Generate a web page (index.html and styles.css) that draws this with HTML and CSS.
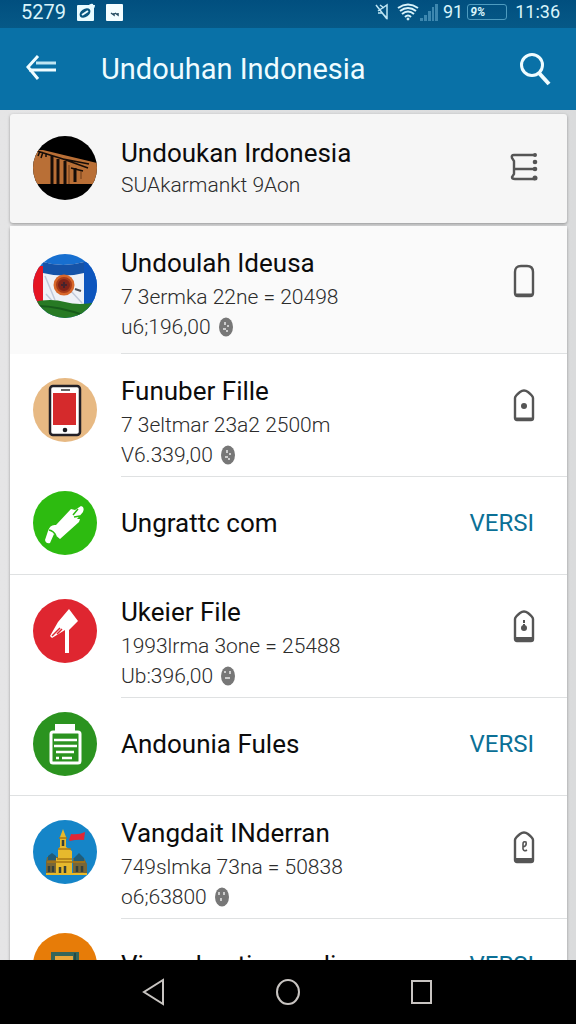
FILE: index.html
```html
<!DOCTYPE html>
<html lang="id">
  <head>
    <meta charset="UTF-8" />
    <meta name="viewport" content="width=device-width, initial-scale=1.0" />
    <title>Undouhan Indonesia</title>
    <link rel="stylesheet" href="styles.css">
  </head>
  <body>
    <div class="screen">
      <div class="status-bar">
        <span class="status-text">5279</span>
        <svg class="status-edit" width="20" height="20" viewBox="0 0 20 20">
          <rect x="1" y="3" width="17" height="16" rx="1" fill="#e9fbff" />
          <ellipse cx="9" cy="11" rx="6" ry="4" transform="rotate(-35 9 11)" fill="#07557f" />
          <path d="M6 13l6-4" stroke="#e9fbff" stroke-width="2" />
          <path d="M13 5q1-3 4-2M14 7q4 0 4-4" fill="none" stroke="#e9fbff" stroke-width="2" />
        </svg>
        <svg class="status-app" width="17" height="17" viewBox="0 0 17 17">
          <rect width="17" height="17" rx="1" fill="#f4fdff" />
          <path d="M5 9l3 2v-2M9 9l3 2v-2" stroke="#244a60" stroke-width="1.5" fill="none" />
        </svg>
        <div class="status-right">
          <svg width="14" height="18" viewBox="0 0 14 18" fill="none" stroke="#bfe6f4" stroke-width="1.5">
            <path d="M1 2l11 14M3 10h4l5 5V2L9 4L3 8M5 2l4 3" />
          </svg>
          <svg class="wifi" width="22" height="18" viewBox="0 0 22 18" fill="none" stroke="#d9f4fb" stroke-width="2.4">
            <path d="M1 5Q11-2 21 5M3 8Q11 2 19 8M5 11Q11 6 17 11M8 14Q11 11 14 14" stroke-width="2" />
            <circle cx="11" cy="16" r="1" fill="#d9f4fb" stroke-width="1" />
          </svg>
          <svg width="20" height="18" viewBox="0 0 20 18" fill="#3d87af">
            <path d="M1 15h3v3H1zM5 12h3v6H5zM9 8h3v10H9zM13 4h2v14h-2zM16 1h3v17h-3z" />
          </svg>
          <span class="status-text charge">91</span>
          <span class="battery">9%</span>
          <span class="status-text clock">11:36</span>
        </div>
      </div>

      <header class="app-bar">
        <button class="icon-button" aria-label="Kembali">
          <svg width="32" height="28" viewBox="0 0 32 28" fill="none" stroke="#effcff" stroke-width="3">
            <path d="M13 1L3 12l10 12" />
            <path d="M11 8h20" stroke="#bfe5f2" />
            <path d="M4 15h27" />
          </svg>
        </button>
        <h1 class="app-title">Undouhan Indonesia</h1>
        <button class="icon-button" aria-label="Cari">
          <svg width="32" height="34" viewBox="0 0 32 34" fill="none" stroke="#effcff">
            <circle cx="13" cy="13" r="10.500" stroke-width="3" />
            <path d="M20 21l10 11" stroke-width="4" />
          </svg>
        </button>
      </header>

      <main class="content">
        <section class="card summary">
          <svg class="avatar" viewBox="0 0 64 64">
            <clipPath id="round"><circle cx="32" cy="32" r="32" /></clipPath>
            <g clip-path="url(#round)">
              <rect width="64" height="64" fill="#000" />
              <path d="M0 14L10 14L64 27V48H0z" fill="#b96f36" />
              <path d="M4 15L30 23L55 32M7 15l-2 5M10 16l-2 6M13 17v4M30 23l26 5M38 32l12 3" stroke="#160d08" stroke-width="1.500" fill="none" />
              <path d="M19 20v28M25 23v25M32 25v23M42 32v14" stroke="#160d08" stroke-width="3" />
              <path d="M36 29v19M48 35v8" stroke="#6d3c19" stroke-width="1" />
            </g>
          </svg>
          <div class="row-text">
            <h2 class="row-title">Undoukan Irdonesia</h2>
            <p class="row-line">SUAkarmankt 9Aon</p>
          </div>
          <button class="row-action" aria-label="Daftar">
            <svg width="28" height="30" viewBox="0 0 28 30" fill="none" stroke="#555" stroke-width="2.400">
              <path d="M26 3H4Q1 3 2 6l2 3v13l-2 3q0 2 3 2h20M4 17h20" />
              <g fill="#555" stroke="none"><circle cx="25" cy="3" r="2" /><circle cx="25" cy="10" r="2.300" /><circle cx="25" cy="17" r="2.300" /><circle cx="25" cy="26" r="2.500" /></g>
            </svg>
          </button>
        </section>

        <ul class="card list">
          <li class="row detail tinted">
            <svg class="avatar" viewBox="0 0 64 64">
              <g clip-path="url(#round)">
                <rect width="64" height="64" fill="#176fd0" />
                <path d="M0 12h10v40H0z" fill="#e51422" />
                <path d="M10 8q20 6 41 0v44H10z" fill="#eef1f7" />
                <path d="M10 8q20 6 41 0v11q-20 5-41 0z" fill="#1553a8" />
                <path d="M51 8h13v46H51z" fill="#0d55bd" />
                <path d="M12 22l10 24M38 37l11 12M13 40l9 10" stroke="#c1c9da" stroke-width="1.500" />
                <path d="M0 48q18-4 32 0t32 0v16H0z" fill="#277a24" />
                <path d="M5 52q20 0 48 10" stroke="#175b1b" stroke-width="2" fill="none" />
                <circle cx="31" cy="31" r="10.500" fill="#d8672b" />
                <circle cx="31" cy="31" r="7" fill="#802319" stroke="#a73b19" stroke-width="2" />
                <path d="M28 31h6M31 28v6" stroke="#45232c" stroke-width="2" />
                <path d="M42 35l6 2" stroke="#4d5058" stroke-width="2" />
              </g>
            </svg>
            <div class="row-body">
              <div class="row-text">
                <h2 class="row-title">Undoulah Ideusa</h2>
                <p class="row-line">7 3ermka 22ne = 20498</p>
                <p class="row-line">u6;196,00 <svg class="badge" width="14" height="20" viewBox="0 0 14 20"><ellipse cx="7" cy="10" rx="7" ry="9.500" fill="#777" /><path d="M6 5v3M9 8v2M4 12h3M8 13v2" stroke="#ccc" stroke-width="2" /></svg></p>
              </div>
              <button class="row-action" aria-label="Perangkat">
                <svg width="22" height="34" viewBox="0 0 22 34" fill="none" stroke="#555">
                  <path d="M2 8Q2 2 8 2h6q6 0 6 6v21q0 3-3 3H5q-3 0-3-3z" stroke-width="2.400" />
                  <path d="M3 31h16" stroke-width="3" />
                </svg>
              </button>
            </div>
          </li>

          <li class="row detail">
            <svg class="avatar" viewBox="0 0 64 64">
              <circle cx="32" cy="32" r="32" fill="#e7b983" />
              <rect x="17" y="8" width="30" height="49" rx="3" fill="#fff" stroke="#222027" stroke-width="2.500" />
              <rect x="20" y="15" width="23" height="32" fill="#d52a2c" />
              <path d="M28 12h9" stroke="#333" stroke-width="1.500" />
              <circle cx="32" cy="52" r="2.300" fill="#181a20" />
            </svg>
            <div class="row-body">
              <div class="row-text">
                <h2 class="row-title">Funuber Fille</h2>
                <p class="row-line">7 3eltmar 23a2 2500m</p>
                <p class="row-line">V6.339,00 <svg class="badge" width="14" height="20" viewBox="0 0 14 20"><ellipse cx="7" cy="10" rx="7" ry="9.500" fill="#777" /><path d="M6 5v3M9 8v2M4 12h3M8 13v2" stroke="#ccc" stroke-width="2" /></svg></p>
              </div>
              <button class="row-action" aria-label="Perangkat">
                <svg width="22" height="34" viewBox="0 0 22 34" fill="none" stroke="#555">
                  <path d="M2 10q0-2 5-6 4-3 8 0 5 4 5 6v20q0 2-2 2H4q-2 0-2-2z" stroke-width="2.400" />
                  <path d="M3 31h16" stroke-width="3" />
                  <circle cx="11" cy="18" r="3" fill="#555" stroke="none" />
                </svg>
              </button>
            </div>
          </li>

          <li class="row simple">
            <svg class="avatar" viewBox="0 0 64 64">
              <circle cx="32" cy="32" r="32" fill="#2dbb10" />
              <path d="M27 48L46 31 47 28 44 28 50 21Q52 16 48 15L42 19 38 18 23 34Q17 33 15 40L12 49Q13 53 17 52L21 43z" fill="#fff" />
              <path d="M40 24l5-6M41 26l6-1M16 39q5 1 7 6" stroke="#2dbb10" stroke-width="1.500" fill="none" />
            </svg>
            <div class="row-body">
              <h2 class="row-title">Ungrattc com</h2>
              <button class="versi">VERSI</button>
            </div>
          </li>

          <li class="row detail">
            <svg class="avatar" viewBox="0 0 64 64">
              <circle cx="32" cy="32" r="32" fill="#df2630" />
              <path d="M36 10L45 22 36 31V54H32V31L19 39 17 37 25 23z" fill="#fff" />
              <path d="M19 37l8-8M24 35l5-5" stroke="#df2630" stroke-width="1.500" />
            </svg>
            <div class="row-body">
              <div class="row-text">
                <h2 class="row-title">Ukeier File</h2>
                <p class="row-line">1993lrma 3one = 25488</p>
                <p class="row-line">Ub:396,00 <svg class="badge" width="14" height="20" viewBox="0 0 14 20"><ellipse cx="7" cy="10" rx="7" ry="9.500" fill="#777" /><path d="M4 5v2M9 5v3M4 12h5" stroke="#ccc" stroke-width="2" /></svg></p>
              </div>
              <button class="row-action" aria-label="Perangkat">
                <svg width="22" height="34" viewBox="0 0 22 34" fill="none" stroke="#555">
                  <path d="M2 10q0-2 5-6 4-3 8 0 5 4 5 6v20q0 2-2 2H4q-2 0-2-2z" stroke-width="2.400" />
                  <path d="M3 30h16" stroke-width="4" />
                  <circle cx="11" cy="19" r="3" fill="#555" stroke="none" /><path d="M11 11v3M11 15v3" stroke-width="2" />
                </svg>
              </button>
            </div>
          </li>

          <li class="row simple">
            <svg class="avatar" viewBox="0 0 64 64">
              <circle cx="32" cy="32" r="32" fill="#2b931f" />
              <path d="M22 12h20v8h-20z" fill="#fff" />
              <rect x="18" y="20" width="29" height="31" rx="2" fill="#2b931f" stroke="#fff" stroke-width="3" />
              <path d="M21 28h23M21 34h23M23 40h18M23 46h3M29 46h10" stroke="#fff" stroke-width="2.300" />
            </svg>
            <div class="row-body">
              <h2 class="row-title">Andounia Fules</h2>
              <button class="versi">VERSI</button>
            </div>
          </li>

          <li class="row detail">
            <svg class="avatar" viewBox="0 0 64 64">
              <circle cx="32" cy="32" r="32" fill="#1585c8" />
              <path d="M14 37h11v17H13V42zM40 38h11l3 6v9H40z" fill="#786637" />
              <path d="M15 36l4-3 4 3v4h-8zM41 38l5-5 5 5v3H41z" fill="#205c78" />
              <path d="M25 29l2-2V17l3-8 3 8v10l6 4v22H23V38h2z" fill="#e6b92d" />
              <path d="M26 18h8M25 29h13M24 39h15M14 42h38" stroke="#a97713" stroke-width="1.500" />
              <path d="M30 20v6M27 47v6M32 46v7M16 46v6M20 46v6M44 46v6M49 46v6" stroke="#34403a" stroke-width="2.500" />
              <path d="M36 20l2-6q8 1 14-2l-1 8q-7-1-14 1z" fill="#df2735" />
              <path d="M13 54h41" stroke="#e9b927" stroke-width="2" />
            </svg>
            <div class="row-body">
              <div class="row-text">
                <h2 class="row-title">Vangdait INderran</h2>
                <p class="row-line">749slmka 73na = 50838</p>
                <p class="row-line">o6;63800 <svg class="badge" width="14" height="20" viewBox="0 0 14 20"><ellipse cx="7" cy="10" rx="7" ry="9.500" fill="#777" /><path d="M4 5v3M9 5v3M6 11v3" stroke="#ccc" stroke-width="2" /></svg></p>
              </div>
              <button class="row-action" aria-label="Perangkat">
                <svg width="22" height="34" viewBox="0 0 22 34" fill="none" stroke="#555">
                  <path d="M2 10q0-2 5-6 4-3 8 0 5 4 5 6v20q0 2-2 2H4q-2 0-2-2z" stroke-width="2.400" />
                  <path d="M3 30h16" stroke-width="4" />
                  <path d="M10 17q4-1 3-5-3-1-3 2v5q1 3 4 1" stroke-width="1.600" />
                </svg>
              </button>
            </div>
          </li>

          <li class="row simple">
            <svg class="avatar" viewBox="0 0 64 64">
              <circle cx="32" cy="32" r="32" fill="#e77c08" />
              <path d="M18 19h28v28H18z" fill="#35665a" />
              <path d="M22 23h18v20H22z" fill="#e9a73a" />
              <path d="M42 20v22" stroke="#254a45" stroke-width="2" />
            </svg>
            <div class="row-body">
              <h2 class="row-title">Vioprakautipowadiu</h2>
              <button class="versi">VERSI</button>
            </div>
          </li>
        </ul>
      </main>

      <nav class="nav-bar">
        <button class="icon-button" aria-label="Kembali">
          <svg width="24" height="28" viewBox="0 0 24 28" fill="none" stroke="#c8c4c1" stroke-width="2"><path d="M21 2v24L2 14z" /></svg>
        </button>
        <button class="icon-button" aria-label="Beranda">
          <svg width="26" height="28" viewBox="0 0 26 28" fill="none" stroke="#c8c4c1" stroke-width="2"><ellipse cx="13" cy="14" rx="11" ry="12" /></svg>
        </button>
        <button class="icon-button" aria-label="Aplikasi terbaru">
          <svg width="24" height="28" viewBox="0 0 24 28" fill="none" stroke="#c8c4c1" stroke-width="2"><rect x="2" y="3" width="19" height="22" /></svg>
        </button>
      </nav>
    </div>
  </body>
</html>
```
FILE: styles.css
```css
* {
  box-sizing: border-box;
}

body {
  margin: 0;
  font-family: Roboto, "Liberation Sans", sans-serif;
  background: #dedfe0;
  color: #0c0c0c;
}

h1,
h2,
p,
ul {
  margin: 0;
  padding: 0;
  font-weight: 400;
}

button {
  border: none;
  background: none;
  padding: 0;
  font-family: inherit;
  cursor: pointer;
}

svg {
  display: block;
  flex-shrink: 0;
}

.screen {
  display: flex;
  flex-direction: column;
  height: 100vh;
}

.status-bar {
  display: flex;
  align-items: center;
  flex-shrink: 0;
  height: 28px;
  padding: 0 16px 4px 21px;
  background: linear-gradient(#014f7f, #065987);
  color: #d9f4fb;
}

.status-text {
  font-size: 20px;
  line-height: 24px;
}

.status-edit {
  margin-left: 10px;
}

.status-app {
  margin-left: 10px;
}

.status-right {
  display: flex;
  align-items: center;
  margin-left: auto;
}

.wifi {
  margin-left: 8px;
}

.status-text.charge {
  font-size: 18px;
  margin-left: 4px;
}

.battery {
  width: 40px;
  height: 16px;
  margin: 0 8px 0 4px;
  padding-left: 2px;
  border: 1px solid #4e9cc0;
  border-radius: 3px;
  font-size: 12px;
  font-weight: 700;
  font-style: italic;
  line-height: 14px;
}

.status-text.clock {
  font-size: 18px;
}

.app-bar {
  display: flex;
  align-items: center;
  flex-shrink: 0;
  height: 82px;
  padding: 0 25px;
  background: #0971a7;
  color: #effcff;
}

.app-title {
  flex: 1;
  margin-left: 44px;
  font-size: 29px;
  line-height: 36px;
}

.content {
  flex: 1;
  min-height: 0;
  overflow: hidden;
  padding: 4px 9px 0 10px;
  background: linear-gradient(90deg, #e5e5e6, #dadbdc);
}

.card {
  background: #fff;
  border-radius: 3px;
  box-shadow: 0 1px 3px rgba(0, 0, 0, 0.35);
}

.summary {
  display: flex;
  height: 109px;
  padding: 22px 29px 0 23px;
  background: #f6f6f6;
}

.summary .row-text {
  margin-left: 24px;
}

.summary .row-action {
  margin-top: 16px;
}

.list {
  margin-top: 3px;
  list-style: none;
}

.avatar {
  width: 64px;
  height: 64px;
}

.row {
  display: flex;
  padding-left: 23px;
}

.row-body {
  display: flex;
  flex: 1;
  margin-left: 24px;
}

.row-text {
  flex: 1;
}

.detail .avatar {
  margin-top: 24px;
}

.detail .row-body {
  min-height: 123px;
  padding: 20px 32px 0 0;
  border-bottom: 1px solid #dfe1e2;
}

.detail .row-title {
  margin-bottom: 2px;
}

.detail .row-action {
  margin-top: 14px;
}

.tinted {
  background: #fafafa;
}

.tinted .avatar {
  margin-top: 28px;
}

.tinted .row-body {
  min-height: 128px;
}

.tinted .row-action {
  margin-top: 18px;
}

.simple {
  align-items: center;
  height: 98px;
  padding-bottom: 6px;
  border-bottom: 1px solid #dfe1e2;
}

.simple .row-body {
  align-items: center;
  justify-content: space-between;
  padding-right: 33px;
}

.row-title {
  font-size: 26px;
  line-height: 34px;
}

.row-line {
  display: flex;
  align-items: center;
  gap: 8px;
  font-size: 21px;
  font-weight: 300;
  line-height: 30px;
  color: #2c2c2c;
}

.row-action {
  align-self: flex-start;
}

.versi {
  font-size: 24px;
  line-height: 34px;
  color: #0b7096;
}

.nav-bar {
  display: flex;
  align-items: center;
  justify-content: center;
  gap: 109px;
  flex-shrink: 0;
  height: 64px;
  background: #000;
}
```
